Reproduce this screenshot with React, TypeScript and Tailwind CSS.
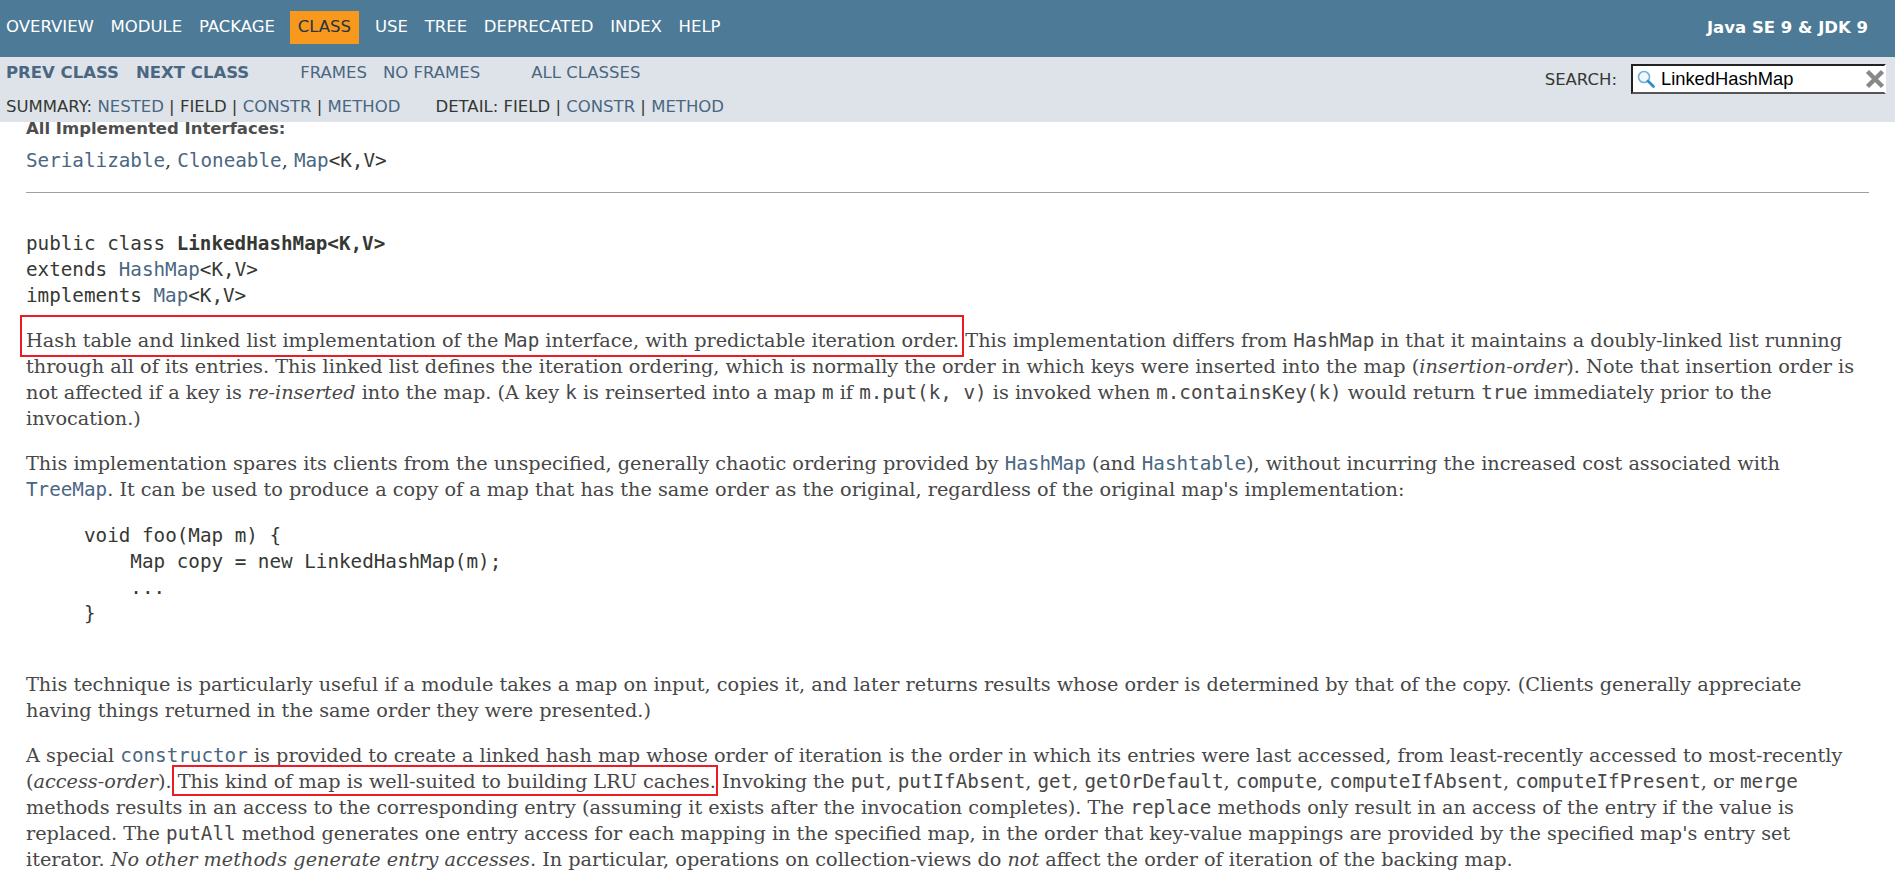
const serif = "font-['DejaVu_Serif',serif]";

const C = ({ children, link }: { children: React.ReactNode; link?: boolean }) => (
  <code className={`font-['DejaVu_Sans_Mono',monospace] text-[19.25px] ${link ? 'text-[#4a6782]' : ''}`}>{children}</code>
);

const RedBox = ({ children, frame }: { children: React.ReactNode; frame: string }) => (
  <span className="relative inline-block">
    {children}
    <span className={`absolute border-2 border-[#ed1c24] ${frame}`} />
  </span>
);

const SearchIcon = () => (
  <svg width="20" height="20" viewBox="0 0 20 20" fill="none">
    <circle cx="8" cy="8" r="5.5" stroke="#6fb1d6" strokeWidth="1.6" fill="#f1f8fc" />
    <path d="M12 12l5.5 5.5" stroke="#2f8fc4" strokeWidth="2.8" strokeLinecap="round" />
  </svg>
);

const topItems = ['OVERVIEW', 'MODULE', 'PACKAGE', 'CLASS', 'USE', 'TREE', 'DEPRECATED', 'INDEX', 'HELP'];

export default function App() {
  return (
    <div className="h-screen flex flex-col overflow-hidden bg-white font-['DejaVu_Sans',sans-serif] text-[#353833]">
      {/* top nav */}
      <div className="h-[57px] shrink-0 bg-[#4d7a97] flex items-start justify-between text-white">
        <ul className="flex pt-[11px] pl-[6px] text-[16.5px]">
          {topItems.map((item) =>
            item === 'CLASS' ? (
              <li key={item} className="h-[33px] flex items-center px-[8px] mr-[16px] ml-[-2px] bg-[#f8981d] text-[#253441]">
                {item}
              </li>
            ) : (
              <li key={item} className="h-[33px] flex items-center mr-[16.7px]">
                {item}
              </li>
            ),
          )}
        </ul>
        <div className="pt-[16px] pr-[27px] text-[16.5px] font-bold">Java SE 9 &amp; JDK 9</div>
      </div>

      {/* sub nav */}
      <div className="h-[65px] shrink-0 bg-[#dee3e9] flex justify-between text-[16.5px]">
        <div className="pl-[6px]">
          <div className="flex h-[33px] items-center text-[#4a6782]">
            <b className="mr-[17px]">PREV CLASS</b>
            <b>NEXT CLASS</b>
            <span className="ml-[51px]">FRAMES</span>
            <span className="ml-[16px]">NO FRAMES</span>
            <span className="ml-[51px]">ALL CLASSES</span>
          </div>
          <div className="flex h-[34px] items-center whitespace-pre">
            <span>SUMMARY: </span>
            <span className="text-[#4a6782]">NESTED</span>
            <span> | FIELD | </span>
            <span className="text-[#4a6782]">CONSTR</span>
            <span> | </span>
            <span className="text-[#4a6782]">METHOD</span>
            <span className="ml-[35px]">DETAIL: FIELD | </span>
            <span className="text-[#4a6782]">CONSTR</span>
            <span> | </span>
            <span className="text-[#4a6782]">METHOD</span>
          </div>
        </div>
        <div className="flex items-start pt-[7px] pr-[9px]">
          <span className="mr-[14px] mt-[4px]">SEARCH:</span>
          <div className="w-[255px] h-[30px] bg-white border-2 border-t-[#222] border-l-[#222] border-r-white border-b-[#555] flex items-center pl-[3px]">
            <SearchIcon />
            <span className="ml-[5px] flex-1 font-['Liberation_Sans',sans-serif] text-[18.33px] text-black">LinkedHashMap</span>
            <svg width="20" height="20" viewBox="0 0 20 20" className="mr-[-1px]">
              <path d="M2.5 2.5l15 15M17.5 2.5l-15 15" stroke="#888888" strokeWidth="4.5" />
            </svg>
          </div>
        </div>
      </div>

      {/* content */}
      <div className={`flex-1 overflow-hidden px-[26px] text-[19.25px] leading-[26px] ${serif} text-[#474747]`}>
        <div className="font-['DejaVu_Sans',sans-serif] font-bold text-[16.5px] text-[#4e4e4e] leading-[13px]">All Implemented Interfaces:</div>
        <div className="mt-[13px] text-[#353833]">
          <C link>Serializable</C>, <C link>Cloneable</C>, <C link>Map</C><C>&lt;K,V&gt;</C>
        </div>
        <hr className="mt-[18px] border-t border-[#a0a0a0]" />
        <pre className="mt-[38px] font-['DejaVu_Sans_Mono',monospace] text-[19.25px] leading-[26px] text-[#353833]">
          public class <b>LinkedHashMap&lt;K,V&gt;</b>{'\n'}extends <span className="text-[#4a6782]">HashMap</span>&lt;K,V&gt;{'\n'}implements <span className="text-[#4a6782]">Map</span>&lt;K,V&gt;
        </pre>
        <p className="mt-[19px]">
          <RedBox frame="-left-[6px] -right-[5px] -top-[13px] -bottom-[3px]">Hash table and linked list implementation of the <C>Map</C> interface, with predictable iteration order.</RedBox> This implementation differs from <C>HashMap</C> in that it maintains a doubly-linked list running through all of its entries. This linked list defines the iteration ordering, which is normally the order in which keys were inserted into the map (<i>insertion-order</i>). Note that insertion order is not affected if a key is <i>re-inserted</i> into the map. (A key <C>k</C> is reinserted into a map <C>m</C> if <C>m.put(k, v)</C> is invoked when <C>m.containsKey(k)</C> would return <C>true</C> immediately prior to the invocation.)
        </p>
        <p className="mt-[19px]">
          This implementation spares its clients from the unspecified, generally chaotic ordering provided by <C link>HashMap</C> (and <C link>Hashtable</C>), without incurring the increased cost associated with <C link>TreeMap</C>. It can be used to produce a copy of a map that has the same order as the original, regardless of the original map's implementation:
        </p>
        <pre className="mt-[20px] ml-[58px] font-['DejaVu_Sans_Mono',monospace] text-[19.25px] leading-[26px] text-[#353833]">
          {'void foo(Map m) {\n    Map copy = new LinkedHashMap(m);\n    ...\n}'}
        </pre>
        <p className="mt-[45px]">
          This technique is particularly useful if a module takes a map on input, copies it, and later returns results whose order is determined by that of the copy. (Clients generally appreciate having things returned in the same order they were presented.)
        </p>
        <p className="mt-[19px]">
          A special <C link>constructor</C> is provided to create a linked hash map whose order of iteration is the order in which its entries were last accessed, from least-recently accessed to most-recently (<i>access-order</i>). <RedBox frame="-left-[6px] -right-[2px] -top-[4px] -bottom-[1px]">This kind of map is well-suited to building LRU caches.</RedBox> Invoking the <C>put</C>, <C>putIfAbsent</C>, <C>get</C>, <C>getOrDefault</C>, <C>compute</C>, <C>computeIfAbsent</C>, <C>computeIfPresent</C>, or <C>merge</C> methods results in an access to the corresponding entry (assuming it exists after the invocation completes). The <C>replace</C> methods only result in an access of the entry if the value is replaced. The <C>putAll</C> method generates one entry access for each mapping in the specified map, in the order that key-value mappings are provided by the specified map's entry set iterator. <i>No other methods generate entry accesses</i>. In particular, operations on collection-views do <i>not</i> affect the order of iteration of the backing map.
        </p>
      </div>
    </div>
  );
}
